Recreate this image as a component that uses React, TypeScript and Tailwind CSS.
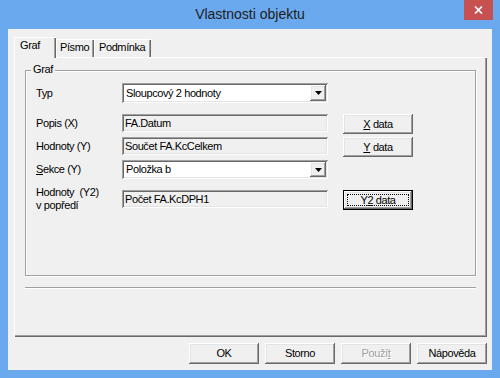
const raised =
  "shadow-[inset_-1px_-1px_#696969,inset_1px_1px_#ffffff,inset_-2px_-2px_#a0a0a0,inset_2px_2px_#e3e3e3]";
const sunken =
  "shadow-[inset_1px_1px_#a0a0a0,inset_-1px_-1px_#ffffff,inset_2px_2px_#696969,inset_-2px_-2px_#e3e3e3]";

const Select = ({ value, h }: { value: string; h: string }) => (
  <div className={`flex w-[206px] ${h} bg-white p-[2px] ${sunken}`}>
    <div className="flex flex-1 items-center pl-[2px]">{value}</div>
    <div className={`flex w-[16px] items-center justify-center bg-[#f0f0f0] ${raised}`}>
      <svg width="7" height="4" viewBox="0 0 7 4">
        <path d="M0 0 H7 L3.5 4 Z" fill="#000" />
      </svg>
    </div>
  </div>
);

const Field = ({ value }: { value: string }) => (
  <div className={`flex w-[206px] h-[18px] items-center bg-[#f0f0f0] pl-[3px] ${sunken}`}>{value}</div>
);

const Button = ({ children, focus }: { children: React.ReactNode; focus?: boolean }) =>
  focus ? (
    <div className="ml-[15px] w-[70px] h-[20px] border border-black">
      <div className={`flex h-full items-center justify-center p-[3px] ${raised}`}>
        <div className="flex h-full w-full items-center justify-center border border-dotted border-black">
          {children}
        </div>
      </div>
    </div>
  ) : (
    <div className={`ml-[15px] flex w-[70px] h-[20px] items-center justify-center ${raised}`}>{children}</div>
  );

export default function App() {
  return (
    <div className="flex h-[378px] w-[500px] flex-col bg-[#6ba9ef] font-['Liberation_Sans',Arial,sans-serif] text-[11px] leading-[13px] tracking-[-0.4px] text-black">
      {/* title bar */}
      <div className="relative flex h-[29px] items-center justify-center">
        <span className="text-[14px] tracking-normal text-[#1c1c1c]">Vlastnosti objektu</span>
        <div className="absolute right-[7px] top-0 flex h-[20px] w-[29px] items-center justify-center bg-[#c75050]">
          <svg width="9" height="8" viewBox="0 0 9 8">
            <path d="M1 0.5 L8 7.5 M8 0.5 L1 7.5" stroke="#fff" strokeWidth="1.7" />
          </svg>
        </div>
      </div>

      {/* client */}
      <div className="mx-[8px] flex h-[341px] flex-col bg-[#f0f0f0] pl-[6px] pr-[5px] pt-[8px]">
        {/* tabs */}
        <div className="flex h-[20px] items-end">
          <div className="relative z-10 -mb-px h-[21px] w-[42px] bg-[#f0f0f0] pl-[6px] pt-[2px] shadow-[inset_1px_1px_#ffffff,inset_-1px_0_#696969,inset_-2px_0_#a0a0a0]">
            Graf
          </div>
          <div className="h-[18px] w-[38px] pl-[4px] pt-[2px] shadow-[inset_1px_1px_#ffffff,inset_-1px_0_#696969,inset_-2px_0_#a0a0a0]">
            Písmo
          </div>
          <div className="h-[18px] w-[57px] pl-[5px] pt-[2px] shadow-[inset_1px_1px_#ffffff,inset_-1px_0_#696969,inset_-2px_0_#a0a0a0]">
            Podmínka
          </div>
        </div>

        {/* tab panel */}
        <div className="flex h-[280px] flex-col px-[11px] pt-[13px] shadow-[inset_1px_1px_#ffffff,inset_-1px_-1px_#696969,inset_-2px_-2px_#a0a0a0]">
          <div className="relative h-[206px] w-[451px] border border-[#a0a0a0] pl-[10px] pt-[12px] shadow-[inset_1px_1px_#ffffff,1px_1px_#ffffff]">
            <span className="absolute -top-[8px] left-[5px] bg-[#f0f0f0] px-[2px]">Graf</span>

            <div className="flex h-[20px]">
              <div className="flex w-[86px] items-center">Typ</div>
              <Select value="Sloupcový 2 hodnoty" h="h-[20px]" />
            </div>

            <div className="mt-[11px] flex items-start">
              <div className="flex h-[18px] w-[86px] items-center">Popis (X)</div>
              <Field value="FA.Datum" />
              <Button>
                <span className="underline">X</span>&nbsp;data
              </Button>
            </div>

            <div className="mt-[3px] flex items-start">
              <div className="flex h-[18px] w-[86px] items-center">Hodnoty (Y)</div>
              <Field value="Součet FA.KcCelkem" />
              <Button>
                <span className="underline">Y</span>&nbsp;data
              </Button>
            </div>

            <div className="mt-[3px] flex h-[19px]">
              <div className="flex w-[86px] items-center">
                <span className="underline">S</span>ekce (Y)
              </div>
              <Select value="Položka b" h="h-[19px]" />
            </div>

            <div className="mt-[11px] flex items-start">
              <div className="-mt-[4px] w-[86px]">
                <div>Hodnoty&nbsp;&nbsp;(Y2)</div>
                <div>v popředí</div>
              </div>
              <Field value="Počet FA.KcDPH1" />
              <Button focus>
                Y<span className="underline">2</span>&nbsp;data
              </Button>
            </div>
          </div>

          <div className="mt-[11px] h-[2px] w-[451px] border-b border-t border-b-white border-t-[#a0a0a0]" />
        </div>

        {/* buttons */}
        <div className="mt-[6px] flex h-[21px] justify-end gap-[6px]">
          <div className={`flex w-[70px] items-center justify-center ${raised}`}>OK</div>
          <div className={`flex w-[70px] items-center justify-center ${raised}`}>Storno</div>
          <div className={`flex w-[70px] items-center justify-center text-[#a0a0a0] [text-shadow:1px_1px_#ffffff] ${raised}`}>
            Použí<span className="underline">t</span>
          </div>
          <div className={`flex w-[70px] items-center justify-center ${raised}`}>Nápověda</div>
        </div>
      </div>
    </div>
  );
}
